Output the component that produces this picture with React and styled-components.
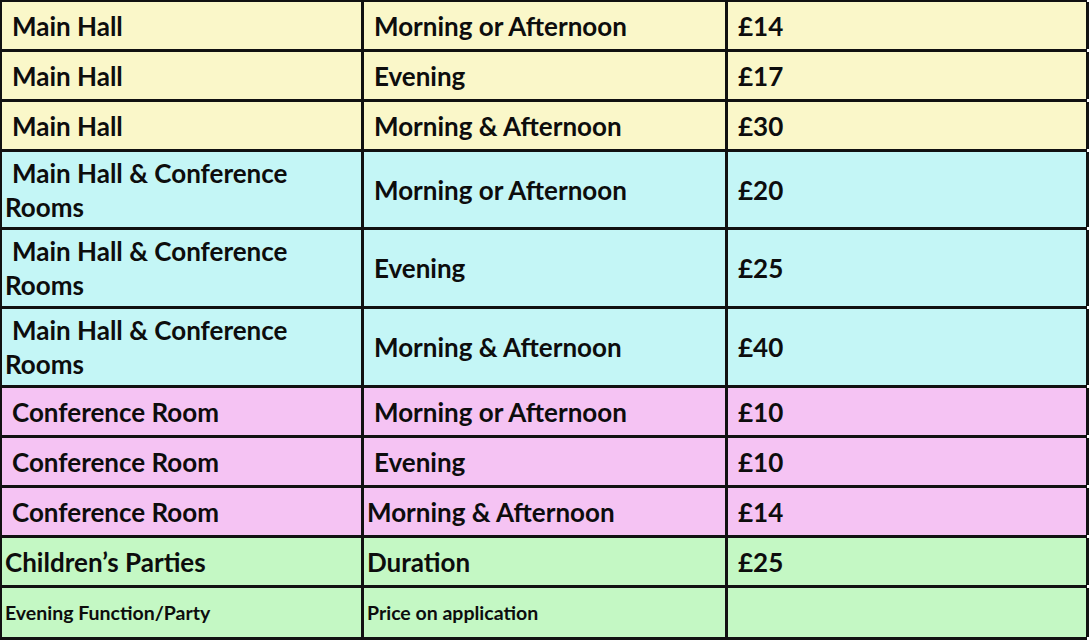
import styled, { createGlobalStyle } from "styled-components";

const GlobalStyle = createGlobalStyle`
  html, body {
    margin: 0;
    padding: 0;
    background: #ffffff;
  }
  body {
    font-family: Lato, "Open Sans", sans-serif;
  }
`;

const colors = {
  yellow: "#faf7c9",
  cyan: "#c4f6f6",
  pink: "#f5c3f3",
  green: "#c4f8c4",
};

const rows = [
  { place: "Main Hall", time: "Morning or Afternoon", price: "£14", tone: "yellow", h: 50 },
  { place: "Main Hall", time: "Evening", price: "£17", tone: "yellow", h: 50 },
  { place: "Main Hall", time: "Morning & Afternoon", price: "£30", tone: "yellow", h: 50 },
  { place: "Main Hall & Conference", place2: "Rooms", time: "Morning or Afternoon", price: "£20", tone: "cyan", h: 78 },
  { place: "Main Hall & Conference", place2: "Rooms", time: "Evening", price: "£25", tone: "cyan", h: 79 },
  { place: "Main Hall & Conference", place2: "Rooms", time: "Morning & Afternoon", price: "£40", tone: "cyan", h: 79 },
  { place: "Conference Room", time: "Morning or Afternoon", price: "£10", tone: "pink", h: 50 },
  { place: "Conference Room", time: "Evening", price: "£10", tone: "pink", h: 50 },
  { place: "Conference Room", time: "Morning & Afternoon", price: "£14", tone: "pink", h: 50, timeFlush: true },
  { place: "Children’s Parties", time: "Duration", price: "£25", tone: "green", h: 50, flush: true, timeFlush: true },
  { place: "Evening Function/Party", time: "Price on application", price: "", tone: "green", h: 52, flush: true, timeFlush: true, small: true },
];

const App = () => {
  return (
    <>
      <GlobalStyle />
      <Table>
        {rows.map((r, i) => (
          <Row key={i} $tone={r.tone} $h={r.h}>
            <Cell $indent={!r.flush} $small={r.small}>
              <div>
                {r.place}
                {r.place2 && <Second>{r.place2}</Second>}
              </div>
            </Cell>
            <Cell $indent={!r.timeFlush} $small={r.small}>
              {r.time}
            </Cell>
            <Cell $indent $small={r.small}>
              {r.price}
            </Cell>
          </Row>
        ))}
      </Table>
    </>
  );
};

// Styled Components
const Table = styled.div`
  width: 1087px;
  display: flex;
  flex-direction: column;
  border-top: 2px solid #111;
  border-left: 2px solid #111;
  box-sizing: border-box;
`;

const Row = styled.div`
  display: grid;
  grid-template-columns: 362px 364px 361px;
  height: ${(p) => p.$h}px;
  background: ${(p) => colors[p.$tone]};
  border-bottom: 3px solid #111;
  box-sizing: border-box;
`;

const Cell = styled.div`
  display: flex;
  align-items: center;
  padding-left: ${(p) => (p.$indent ? 10 : 3)}px;
  border-right: 3px solid #111;
  box-sizing: border-box;
  font-weight: 700;
  font-size: ${(p) => (p.$small ? 19.5 : 26)}px;
  line-height: 34px;
  color: #0d0d0d;
  white-space: nowrap;
  overflow: hidden;
`;

const Second = styled.div`
  margin-left: -7px;
`;

export default App;
